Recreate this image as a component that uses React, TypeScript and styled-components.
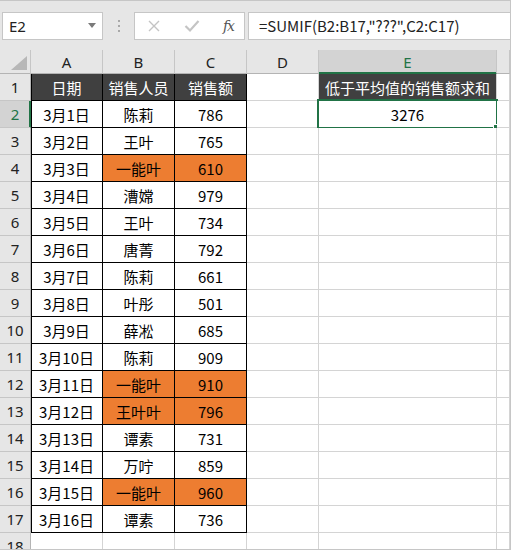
import styled, { createGlobalStyle } from "styled-components";

const GlobalStyle = createGlobalStyle`
  html, body { margin: 0; padding: 0; background: #fff; }
  body { font-family: "Noto Sans CJK SC", "Noto Sans", sans-serif; }
`;

type Row = { date: string; name: string; amount: number; hl?: boolean };

const rows: Row[] = [
  { date: "3月1日", name: "陈莉", amount: 786 },
  { date: "3月2日", name: "王叶", amount: 765 },
  { date: "3月3日", name: "一能叶", amount: 610, hl: true },
  { date: "3月4日", name: "漕嫦", amount: 979 },
  { date: "3月5日", name: "王叶", amount: 734 },
  { date: "3月6日", name: "唐菁", amount: 792 },
  { date: "3月7日", name: "陈莉", amount: 661 },
  { date: "3月8日", name: "叶彤", amount: 501 },
  { date: "3月9日", name: "薛凇", amount: 685 },
  { date: "3月10日", name: "陈莉", amount: 909 },
  { date: "3月11日", name: "一能叶", amount: 910, hl: true },
  { date: "3月12日", name: "王叶叶", amount: 796, hl: true },
  { date: "3月13日", name: "谭素", amount: 731 },
  { date: "3月14日", name: "万咛", amount: 859 },
  { date: "3月15日", name: "一能叶", amount: 960, hl: true },
  { date: "3月16日", name: "谭素", amount: 736 },
];

const columns = ["A", "B", "C", "D", "E"];

const App = () => {
  return (
    <>
      <GlobalStyle />
      <Frame>
        <FormulaBar>
          <NameBox>
            <span>E2</span>
            <svg width="8" height="5" viewBox="0 0 8 5">
              <path d="M0 0h8L4 5z" fill="#7a7a7a" />
            </svg>
          </NameBox>
          <Dots>
            <i />
            <i />
            <i />
          </Dots>
          <FxBox>
            <svg width="14" height="14" viewBox="0 0 14 14">
              <path d="M2 2l10 10M12 2L2 12" stroke="#c4c4c4" strokeWidth="1.4" />
            </svg>
            <svg width="16" height="14" viewBox="0 0 16 14">
              <path d="M1.5 7l4.5 4.5L14.5 2" stroke="#c4c4c4" strokeWidth="2.2" fill="none" />
            </svg>
            <Fx>fx</Fx>
          </FxBox>
          <FormulaInput>=SUMIF(B2:B17,"???",C2:C17)</FormulaInput>
        </FormulaBar>

        <Sheet>
          <Corner>
            <svg width="16" height="14" viewBox="0 0 16 14">
              <path d="M16 0V14H0z" fill="#b7b7b7" />
            </svg>
          </Corner>
          {columns.map((c) => (
            <ColHead key={c} $active={c === "E"}>
              {c}
            </ColHead>
          ))}
          <ColHead />

          <RowHead>1</RowHead>
          <Cell $variant="head" $first>日期</Cell>
          <Cell $variant="head">销售人员</Cell>
          <Cell $variant="head">销售额</Cell>
          <Cell />
          <Cell $variant="head" $plainBorder>低于平均值的销售额求和</Cell>
          <Cell />

          {rows.map((r, i) => (
            <RowLine key={r.date} r={r} n={i + 2} />
          ))}

          <RowHead>18</RowHead>
          <Cell />
          <Cell />
          <Cell />
          <Cell />
          <Cell />
          <Cell />
        </Sheet>
      </Frame>
    </>
  );
};

const RowLine = ({ r, n }: { r: Row; n: number }) => (
  <>
    <RowHead $active={n === 2}>{n}</RowHead>
    <Cell $variant="data" $first>{r.date}</Cell>
    <Cell $variant={r.hl ? "hl" : "data"}>{r.name}</Cell>
    <Cell $variant={r.hl ? "hl" : "data"}>{r.amount}</Cell>
    <Cell />
    {n === 2 ? (
      <Cell>
        3276
        <Selection>
          <Handle />
        </Selection>
      </Cell>
    ) : (
      <Cell />
    )}
    <Cell />
  </>
);

const Frame = styled.div`
  width: 511px;
  height: 550px;
  box-sizing: border-box;
  border-top: 1px solid #c6c6c6;
  border-right: 1px solid #c6c6c6;
  border-bottom: 1px solid #c6c6c6;
  overflow: hidden;
  background: #fff;
`;

const FormulaBar = styled.div`
  height: 49px;
  background: #e6e6e6;
  display: flex;
  align-items: center;
  padding-left: 2px;
`;

const NameBox = styled.div`
  width: 101px;
  height: 28px;
  box-sizing: border-box;
  background: #fff;
  border: 1px solid #c6c6c6;
  display: flex;
  align-items: center;
  justify-content: space-between;
  padding: 0 6px 0 6px;
  font-family: "Noto Sans", sans-serif;
  font-size: 15px;
  color: #222;
`;

const Dots = styled.div`
  width: 31px;
  display: flex;
  flex-direction: column;
  align-items: center;
  gap: 3px;
  i {
    display: block;
    width: 2px;
    height: 2px;
    background: #a8a8a8;
  }
`;

const FxBox = styled.div`
  width: 111px;
  height: 28px;
  box-sizing: border-box;
  background: #fff;
  border: 1px solid #c6c6c6;
  display: flex;
  align-items: center;
  justify-content: space-between;
  padding: 0 10px 0 12px;
`;

const Fx = styled.span`
  font-family: "DejaVu Serif", "Liberation Serif", serif;
  font-style: italic;
  font-size: 14px;
  color: #555;
  letter-spacing: -1px;
`;

const FormulaInput = styled.div`
  flex: 1;
  height: 28px;
  margin-left: 3px;
  box-sizing: border-box;
  background: #fff;
  border: 1px solid #c6c6c6;
  border-right: none;
  display: flex;
  align-items: center;
  padding-left: 10px;
  font-family: "Noto Sans CJK SC", "Noto Sans", sans-serif;
  font-size: 15px;
  color: #222;
`;

const Sheet = styled.div`
  display: grid;
  grid-template-columns: 31px 72px 72px 72px 72px 178px 1fr;
  grid-template-rows: 24px repeat(18, 27px);
`;

const Corner = styled.div`
  background: #e6e6e6;
  border-right: 1px solid #c6c6c6;
  border-bottom: 1px solid #b4b4b4;
  display: flex;
  align-items: flex-end;
  justify-content: flex-end;
  padding: 0 3px 3px 0;
`;

const ColHead = styled.div<{ $active?: boolean }>`
  background: ${(p) => (p.$active ? "#d3d3d3" : "#e6e6e6")};
  color: ${(p) => (p.$active ? "#217346" : "#222")};
  border-right: 1px solid #c6c6c6;
  border-bottom: 1px solid ${(p) => (p.$active ? "#217346" : "#b4b4b4")};
  box-shadow: ${(p) => (p.$active ? "inset 0 -1px 0 #217346" : "none")};
  display: flex;
  align-items: center;
  justify-content: center;
  font-family: "Noto Sans", sans-serif;
  font-size: 15px;
`;

const RowHead = styled.div<{ $active?: boolean }>`
  background: ${(p) => (p.$active ? "#d3d3d3" : "#e6e6e6")};
  color: ${(p) => (p.$active ? "#217346" : "#222")};
  border-right: 1px solid ${(p) => (p.$active ? "#217346" : "#b4b4b4")};
  border-bottom: 1px solid #c6c6c6;
  box-shadow: ${(p) => (p.$active ? "inset -1px 0 0 #217346" : "none")};
  display: flex;
  align-items: center;
  justify-content: center;
  font-family: "Noto Sans", sans-serif;
  font-size: 15px;
`;

const cellColors = {
  plain: { bg: "#fff", fg: "#000", line: "#d4d4d4" },
  head: { bg: "#404040", fg: "#fff", line: "#000" },
  data: { bg: "#fff", fg: "#000", line: "#000" },
  hl: { bg: "#ed7d31", fg: "#000", line: "#000" },
};

const Cell = styled.div<{
  $variant?: keyof typeof cellColors;
  $first?: boolean;
  $plainBorder?: boolean;
}>`
  position: relative;
  background: ${(p) => cellColors[p.$variant ?? "plain"].bg};
  color: ${(p) => cellColors[p.$variant ?? "plain"].fg};
  border-right: 1px solid
    ${(p) => (p.$plainBorder ? "#d4d4d4" : cellColors[p.$variant ?? "plain"].line)};
  border-bottom: 1px solid
    ${(p) => (p.$plainBorder ? "#d4d4d4" : cellColors[p.$variant ?? "plain"].line)};
  box-shadow: ${(p) => (p.$first ? "inset 1px 0 0 #000" : "none")};
  display: flex;
  align-items: center;
  justify-content: center;
  font-size: 15px;
  white-space: nowrap;
`;

const Selection = styled.div`
  position: absolute;
  top: -2px;
  left: -2px;
  right: -2px;
  bottom: -2px;
  border: 2px solid #217346;
  pointer-events: none;
`;

const Handle = styled.div`
  position: absolute;
  right: -5px;
  bottom: -5px;
  width: 6px;
  height: 6px;
  background: #217346;
  border: 1px solid #fff;
`;

export default App;
